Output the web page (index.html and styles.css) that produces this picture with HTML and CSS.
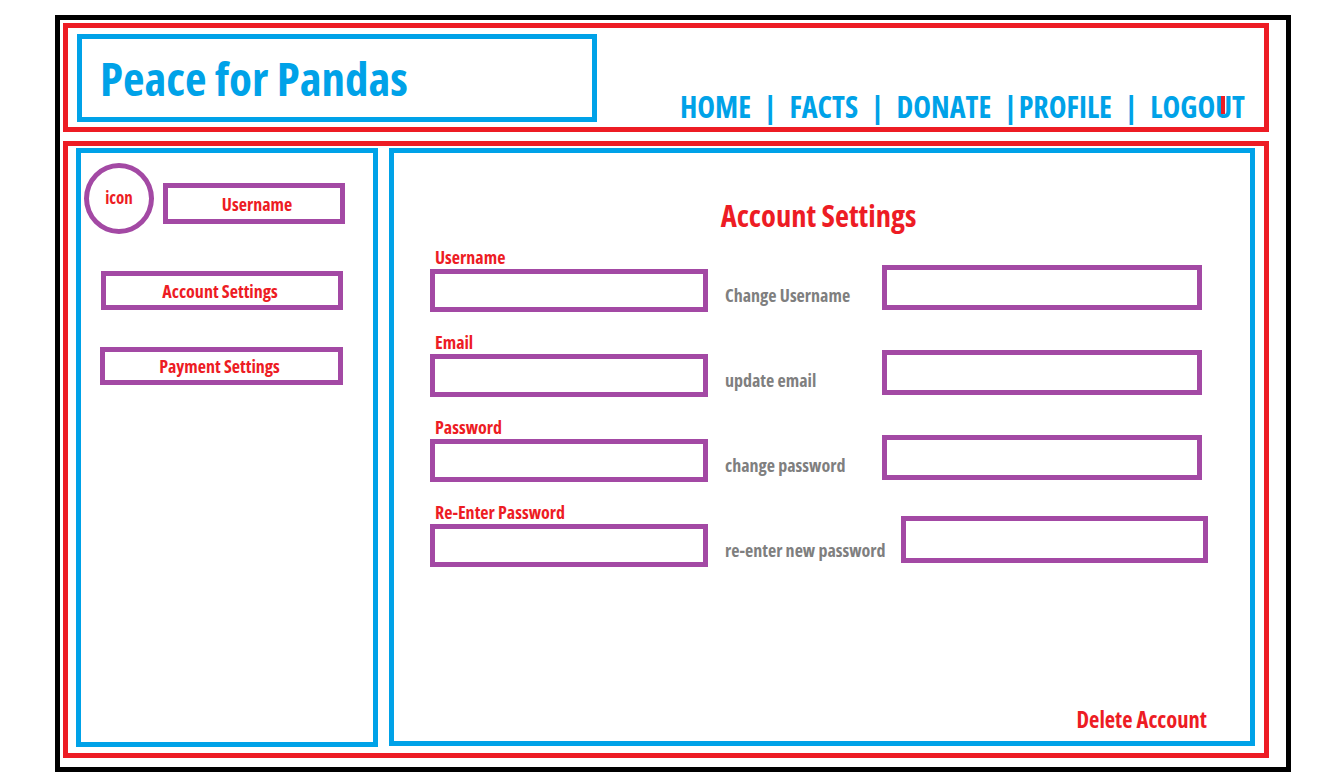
FILE: index.html
```html
<!DOCTYPE html>
<html lang="en">
<head>
    <meta charset="UTF-8">
    <meta name="viewport" content="width=device-width, initial-scale=1.0">
    <title>Peace for Pandas - Account Settings</title>
    <link rel="stylesheet" href="styles.css">
</head>
<body>

<div class="frame">
    <header class="topbar">
        <div class="logo">Peace for Pandas</div>
        <nav class="nav">
            <a href="#">HOME</a>
            <span class="sep">|</span>
            <a href="#">FACTS</a>
            <span class="sep">|</span>
            <a href="#">DONATE</a>
            <span class="sep sep-tight">|</span>
            <a href="#">PROFILE</a>
            <span class="sep">|</span>
            <a href="#" class="logout">LOGOUT</a>
        </nav>
    </header>

    <div class="content">
        <aside class="sidebar">
            <div class="profile">
                <div class="avatar">icon</div>
                <div class="pill user-pill">Username</div>
            </div>
            <a href="#" class="pill side-link account-link">Account Settings</a>
            <a href="#" class="pill side-link payment-link">Payment Settings</a>
        </aside>

        <main class="settings">
            <h1>Account Settings</h1>

            <form class="settings-form">
                <div class="row">
                    <label for="username">Username</label>
                    <input type="text" id="username" class="box">
                    <span class="hint">Change Username</span>
                    <input type="text" id="newUsername" class="box box-new">
                </div>

                <div class="row">
                    <label for="email">Email</label>
                    <input type="email" id="email" class="box">
                    <span class="hint">update email</span>
                    <input type="email" id="newEmail" class="box box-new">
                </div>

                <div class="row">
                    <label for="password">Password</label>
                    <input type="password" id="password" class="box">
                    <span class="hint">change password</span>
                    <input type="password" id="newPassword" class="box box-new">
                </div>

                <div class="row">
                    <label for="password2">Re-Enter Password</label>
                    <input type="password" id="password2" class="box">
                    <span class="hint">re-enter new password</span>
                    <input type="password" id="newPassword2" class="box box-new box-last">
                </div>
            </form>

            <a href="#" class="delete">Delete Account</a>
        </main>
    </div>
</div>

</body>
</html>
```

FILE: styles.css
```css
* {
    box-sizing: border-box;
}
body {
    margin: 0;
    background: #fff;
    font-family: "Open Sans", "Noto Sans", sans-serif;
    font-stretch: 75%;
    font-weight: bold;
}
a {
    text-decoration: none;
}

/* outer black frame */
.frame {
    width: 1236px;
    height: 757px;
    margin: 15px 0 0 55px;
    border: 5px solid #000;
}

/* header */
.topbar {
    display: flex;
    width: 1206px;
    height: 109px;
    margin: 3px 0 0 3px;
    border: 5px solid #ed1c24;
}
.logo {
    width: 520px;
    height: 88px;
    margin: 6px 0 0 9px;
    padding: 16px 0 0 18px;
    border: 5px solid #00a2e8;
    color: #00a2e8;
    font-size: 47px;
    line-height: 1;
}
.nav {
    display: flex;
    gap: 13px;
    align-self: flex-end;
    margin: 0 19px 5px auto;
    font-size: 30px;
    line-height: 1;
}
.nav a,
.nav .sep {
    color: #00a2e8;
}
.nav .sep-tight {
    margin-right: -11px;
}
.logout {
    position: relative;
}
.logout::after {
    content: "";
    position: absolute;
    left: 71px;
    top: 4px;
    width: 4px;
    height: 18px;
    background: #ed1c24;
}

/* body area */
.content {
    display: flex;
    width: 1206px;
    height: 617px;
    margin: 9px 0 0 3px;
    border: 5px solid #ed1c24;
}
.sidebar {
    display: flex;
    flex-direction: column;
    align-items: flex-start;
    width: 302px;
    height: 599px;
    margin: 2px 0 0 8px;
    border: 5px solid #00a2e8;
}
.profile {
    display: flex;
    margin: 10px 0 0 3px;
}
.avatar {
    display: flex;
    align-items: center;
    justify-content: center;
    width: 70px;
    height: 71px;
    padding-bottom: 2px;
    border: 5px solid #a349a4;
    border-radius: 50%;
    color: #ed1c24;
    font-size: 17px;
}
.pill {
    display: flex;
    align-items: center;
    justify-content: center;
    border: 5px solid #a349a4;
    color: #ed1c24;
    font-size: 18px;
}
.user-pill {
    width: 182px;
    height: 41px;
    margin: 20px 0 0 9px;
    padding-left: 6px;
}
.account-link {
    width: 242px;
    height: 39px;
    margin: 37px 0 0 20px;
    padding-right: 4px;
}
.payment-link {
    width: 243px;
    height: 38px;
    margin: 37px 0 0 19px;
    padding-right: 4px;
}

/* settings panel */
.settings {
    display: flex;
    flex-direction: column;
    width: 866px;
    height: 598px;
    margin: 2px 0 0 11px;
    border: 5px solid #00a2e8;
}
.settings h1 {
    margin: 47px 0 0;
    padding-right: 7px;
    text-align: center;
    color: #ed1c24;
    font-size: 30.5px;
    line-height: 30px;
}
.settings-form {
    width: 772px;
    margin: 18px 0 0 36px;
}
.row {
    display: grid;
    grid-template-columns: 278px minmax(0, 1fr) 320px;
    grid-template-rows: auto 43px;
    column-gap: 17px;
}
.row + .row {
    margin-top: 21px;
}
.row label {
    grid-column: 1;
    grid-row: 1;
    margin-bottom: 3px;
    padding-left: 5px;
    color: #ed1c24;
    font-size: 18px;
    line-height: 1;
}
.box {
    display: block;
    width: 100%;
    height: 43px;
    padding: 0;
    border: 5px solid #a349a4;
    background: #fff;
    outline: none;
}
.row .box {
    grid-column: 1;
    grid-row: 2;
}
.hint {
    grid-column: 2;
    grid-row: 2;
    align-self: start;
    margin-top: 17px;
    color: #7f7f7f;
    font-size: 18px;
    line-height: 1;
    white-space: nowrap;
}
.row .box-new {
    grid-column: 3;
    align-self: start;
    height: 45px;
    margin-top: -4px;
}
.row .box-last {
    width: auto;
    height: 47px;
    margin: -8px -6px 0 19px;
}
.delete {
    align-self: flex-end;
    margin: auto 43px 10px 0;
    color: #ed1c24;
    font-size: 22.5px;
    line-height: 1;
}
```
